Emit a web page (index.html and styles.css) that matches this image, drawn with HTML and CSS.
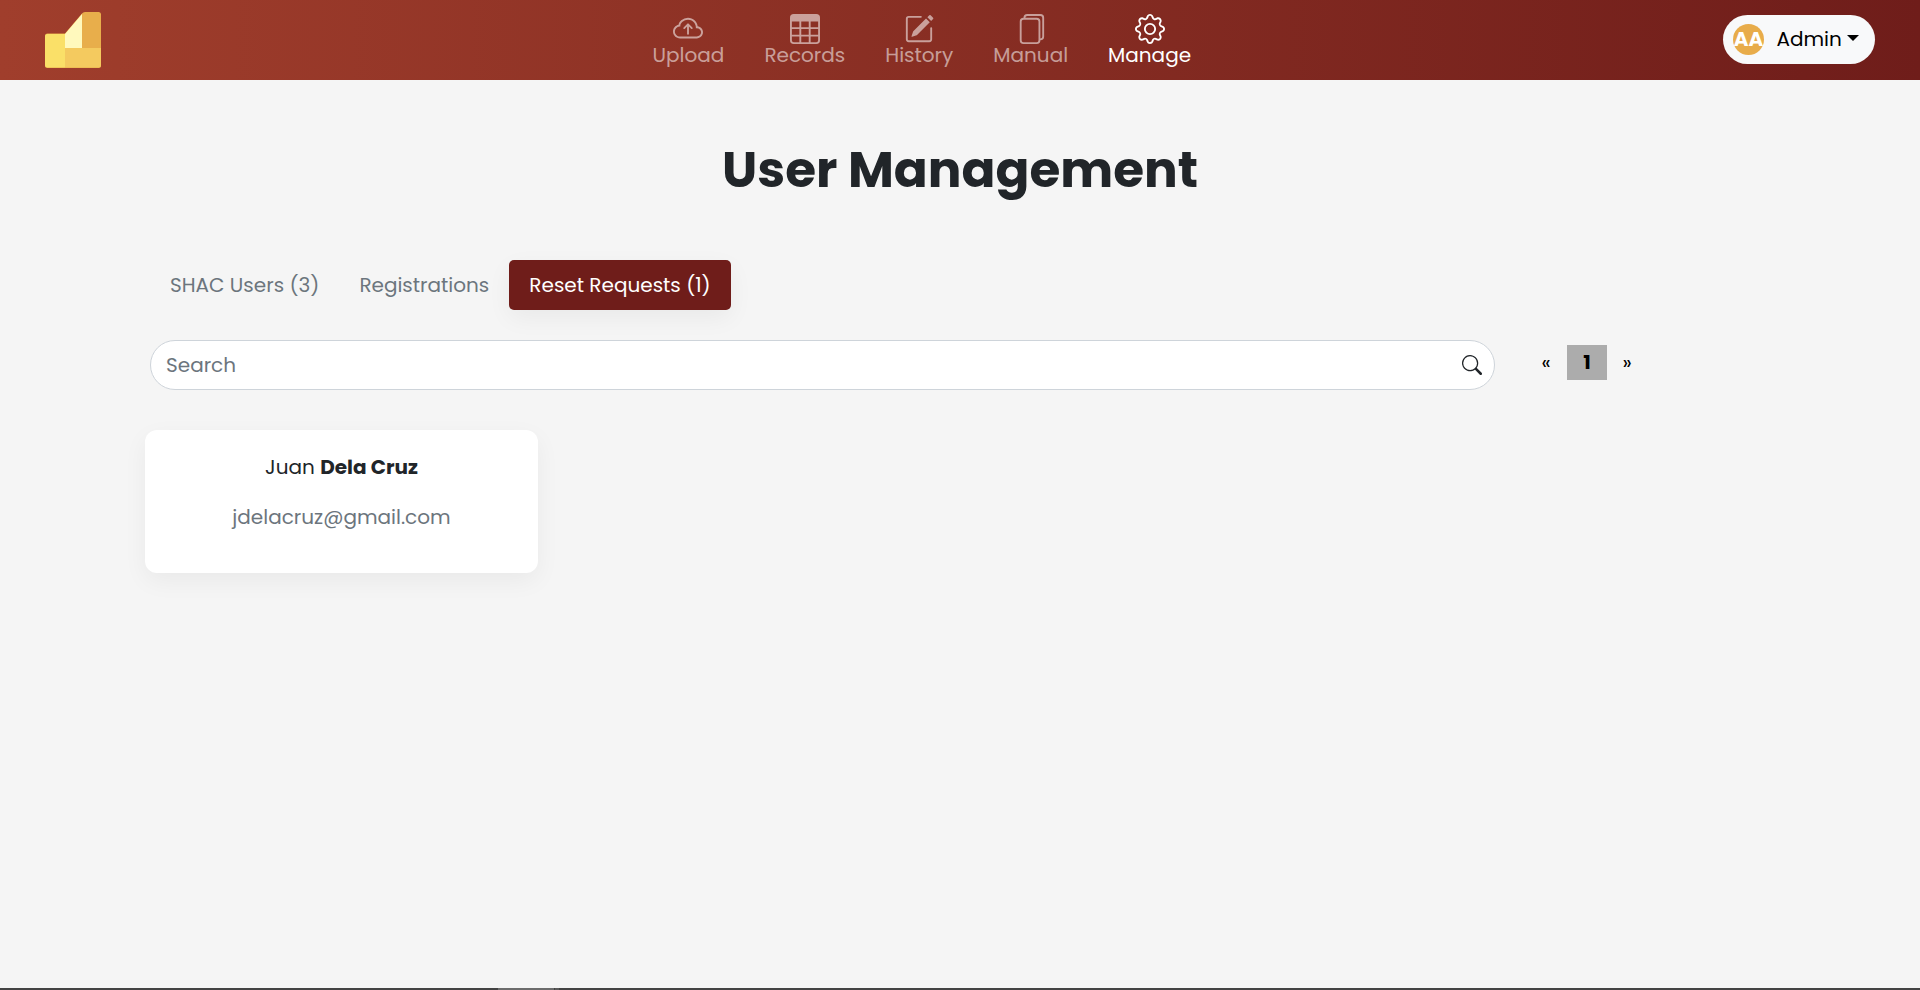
FILE: index.html
```html
<!DOCTYPE html>
<html lang="en">
<head>
<meta charset="utf-8">
<title>User Management</title>
<link rel="stylesheet" href="styles.css">
</head>
<body>
<header class="navbar">
  <a class="brand">
    <svg class="logo" viewBox="0 0 56 56">
      <path d="M0 24q0-2.500 2.500-2.500H20L37 1.500Q38 0 40 0H53.500Q56 0 56 2.500V53.500Q56 56 53.500 56H2.500Q0 56 0 53.500Z" fill="#e8ae4b"/>
      <path d="M0 24.500Q0 22 2.500 22H20V55.500H2.500Q0 55.500 0 53Z" fill="#fae068"/>
      <path d="M20 22L37 2V36H20Z" fill="#fff9bd"/>
      <path d="M20 36H56V53Q56 55.500 53.500 55.500H20Z" fill="#f4ca5f"/>
    </svg>
  </a>
  <nav class="menu">
    <a class="menu-item">
      <svg class="icon" viewBox="0 0 16 16"><path fill-rule="evenodd" d="M7.646 5.146a.5.5 0 0 1 .708 0l2 2a.5.5 0 0 1-.708.708L8.500 6.707V10.500a.5.5 0 0 1-1 0V6.707L6.354 7.854a.5.5 0 1 1-.708-.708z"/><path d="M4.406 3.342A5.530 5.530 0 0 1 8 2c2.690 0 4.923 2 5.166 4.579C14.758 6.804 16 8.137 16 9.773 16 11.569 14.502 13 12.687 13H3.781C1.708 13 0 11.366 0 9.318c0-1.763 1.266-3.223 2.942-3.593.143-.863.698-1.723 1.464-2.383m.653.757c-.757.653-1.153 1.440-1.153 2.056v.448l-.445.049C2.064 6.805 1 7.952 1 9.318 1 10.785 2.230 12 3.781 12h8.906C13.980 12 15 10.988 15 9.773c0-1.216-1.020-2.228-2.313-2.228h-.5v-.5C12.188 4.825 10.328 3 8 3a4.530 4.530 0 0 0-2.941 1.100z"/></svg>
      <span>Upload</span>
    </a>
    <a class="menu-item">
      <svg class="icon" viewBox="0 0 16 16"><path d="M0 2a2 2 0 0 1 2-2h12a2 2 0 0 1 2 2v12a2 2 0 0 1-2 2H2a2 2 0 0 1-2-2zm15 2h-4v3h4zm0 4h-4v3h4zm0 4h-4v3h3a1 1 0 0 0 1-1zm-5 3v-3H6v3zm-5 0v-3H1v2a1 1 0 0 0 1 1zm-4-4h4V8H1zm0-4h4V4H1zm5-3v3h4V4zm4 4H6v3h4z"/></svg>
      <span>Records</span>
    </a>
    <a class="menu-item">
      <svg class="icon" viewBox="0 0 16 16"><path d="M15.502 1.940a.5.5 0 0 1 0 .706L14.459 3.690l-2-2L13.502.646a.5.5 0 0 1 .707 0l1.293 1.293zm-1.750 2.456-2-2L4.939 9.210a.5.5 0 0 0-.121.196l-.805 2.414a.25.25 0 0 0 .316.316l2.414-.805a.5.5 0 0 0 .196-.12l6.813-6.814z"/><path fill-rule="evenodd" d="M1 13.500A1.500 1.500 0 0 0 2.500 15h11a1.500 1.500 0 0 0 1.500-1.500v-6a.5.5 0 0 0-1 0v6a.5.5 0 0 1-.5.5h-11a.5.5 0 0 1-.5-.5v-11a.5.5 0 0 1 .5-.5H9a.5.5 0 0 0 0-1H2.500A1.500 1.500 0 0 0 1 2.500z"/></svg>
      <span>History</span>
    </a>
    <a class="menu-item">
      <svg class="icon" viewBox="0 0 16 16"><path d="M13 0H6a2 2 0 0 0-2 2 2 2 0 0 0-2 2v10a2 2 0 0 0 2 2h7a2 2 0 0 0 2-2 2 2 0 0 0 2-2V2a2 2 0 0 0-2-2m0 13V4a2 2 0 0 0-2-2H5a1 1 0 0 1 1-1h7a1 1 0 0 1 1 1v10a1 1 0 0 1-1 1M3 4a1 1 0 0 1 1-1h7a1 1 0 0 1 1 1v10a1 1 0 0 1-1 1H4a1 1 0 0 1-1-1z"/></svg>
      <span>Manual</span>
    </a>
    <a class="menu-item active">
      <svg class="icon" viewBox="0 0 16 16"><path d="M8 4.754a3.246 3.246 0 1 0 0 6.492 3.246 3.246 0 0 0 0-6.492M5.754 8a2.246 2.246 0 1 1 4.492 0 2.246 2.246 0 0 1-4.492 0"/><path d="M9.796 1.343c-.527-1.790-3.065-1.790-3.592 0l-.094.319a.873.873 0 0 1-1.255.52l-.292-.16c-1.640-.892-3.433.902-2.540 2.541l.159.292a.873.873 0 0 1-.52 1.255l-.319.094c-1.790.527-1.790 3.065 0 3.592l.319.094a.873.873 0 0 1 .52 1.255l-.16.292c-.892 1.640.901 3.434 2.541 2.540l.292-.159a.873.873 0 0 1 1.255.52l.094.319c.527 1.790 3.065 1.790 3.592 0l.094-.319a.873.873 0 0 1 1.255-.52l.292.16c1.640.893 3.434-.902 2.540-2.541l-.159-.292a.873.873 0 0 1 .52-1.255l.319-.094c1.790-.527 1.790-3.065 0-3.592l-.319-.094a.873.873 0 0 1-.52-1.255l.16-.292c.893-1.640-.902-3.433-2.541-2.540l-.292.159a.873.873 0 0 1-1.255-.52zm-2.633.283c.246-.835 1.428-.835 1.674 0l.094.319a1.873 1.873 0 0 0 2.693 1.115l.291-.16c.764-.415 1.600.42 1.184 1.185l-.159.292a1.873 1.873 0 0 0 1.116 2.692l.318.094c.835.246.835 1.428 0 1.674l-.319.094a1.873 1.873 0 0 0-1.115 2.693l.16.291c.415.764-.42 1.600-1.185 1.184l-.291-.159a1.873 1.873 0 0 0-2.693 1.116l-.094.318c-.246.835-1.428.835-1.674 0l-.094-.319a1.873 1.873 0 0 0-2.692-1.115l-.292.16c-.764.415-1.600-.42-1.184-1.185l.159-.291A1.873 1.873 0 0 0 1.945 8.930l-.319-.094c-.835-.246-.835-1.428 0-1.674l.319-.094A1.873 1.873 0 0 0 3.060 4.377l-.16-.292c-.415-.764.42-1.600 1.185-1.184l.292.159a1.873 1.873 0 0 0 2.692-1.115z"/></svg>
      <span>Manage</span>
    </a>
  </nav>
  <button class="account"><span class="avatar">AA</span><span class="account-name">Admin</span><span class="caret"></span></button>
</header>
<main class="page">
  <h1 class="title">User Management</h1>
  <div class="tabs">
    <a class="tab">SHAC Users (3)</a>
    <a class="tab">Registrations</a>
    <a class="tab selected">Reset Requests (1)</a>
  </div>
  <div class="toolbar">
    <div class="search">
      <span class="placeholder">Search</span>
      <svg class="search-icon" viewBox="0 0 16 16"><path d="M11.742 10.344a6.500 6.500 0 1 0-1.397 1.398h-.001q.044.06.098.115l3.850 3.850a1 1 0 0 0 1.415-1.414l-3.850-3.850a1 1 0 0 0-.115-.1zM12 6.500a5.500 5.500 0 1 1-11 0 5.500 5.500 0 0 1 11 0"/></svg>
    </div>
    <div class="pagination"><a class="arrow previous">«</a><a class="current">1</a><a class="arrow">»</a></div>
  </div>
  <section class="card">
    <div class="name">Juan <b>Dela Cruz</b></div>
    <div class="email">jdelacruz@gmail.com</div>
  </section>
</main>
<footer class="bottom-edge"><span class="edge-light"></span><span class="edge-mark"></span></footer>
</body>
</html>
```
FILE: styles.css
```css
* { box-sizing: border-box; }
body {
  margin: 0;
  height: 990px;
  display: flex;
  flex-direction: column;
  overflow: hidden;
  background: #f5f5f5;
  color: #212529;
  font: 400 20px/30px Poppins, Inter, sans-serif;
}
.navbar {
  height: 80px;
  display: grid;
  grid-template-columns: 632.6px 579px 1fr;
  background: linear-gradient(to right, #a03e2c, #6f1d1a);
}
.brand { padding: 12px 0 0 45px; }
.logo { display: block; width: 56px; height: 56px; }
.menu { display: flex; padding-top: 14px; }
.menu-item {
  display: flex;
  flex-direction: column;
  align-items: center;
  padding: 0 20px;
  color: rgba(255, 255, 255, .55);
}
.menu-item span { margin-top: -4px; }
.menu-item.active { color: #fff; }
.icon { width: 30px; height: 30px; fill: currentColor; }
.account {
  justify-self: end;
  margin: 15px 45px 0 0;
  width: 152px;
  height: 49px;
  padding: 0 0 0 10px;
  display: flex;
  align-items: center;
  border: 0;
  border-radius: 25px;
  background: #f8f9fa;
  color: #000;
  font: inherit;
}
.avatar {
  width: 31px;
  height: 31px;
  margin-right: 12px;
  border-radius: 50%;
  display: flex;
  flex: none;
  justify-content: center;
  background: #e8ac4a;
  color: #fff;
  font-weight: 700;
}
.account-name { width: 70px; margin-left: .5px; padding-bottom: 1px; text-align: left; }
.caret {
  margin-bottom: 3px;
  border: 6px solid transparent;
  border-top-color: #000;
  border-bottom: 0;
}
.page { flex: 1; padding: 60px 145px 0; }
.title {
  margin: 0 0 60px;
  font-size: 50px;
  line-height: 60px;
  font-weight: 700;
  text-align: center;
}
.tabs { display: flex; padding-left: 5px; }
.tab { height: 50px; padding: 10px 20px; color: #6c757d; white-space: nowrap; }
.selected {
  border-radius: 5px;
  background: #6f1d1a;
  color: #fff;
  box-shadow: 0 8px 25px rgba(0, 0, 0, .05);
}
.toolbar { display: flex; padding: 30px 0 0 5px; }
.search {
  width: 1345px;
  height: 50px;
  padding: 0 12px 0 15px;
  display: flex;
  align-items: center;
  justify-content: space-between;
  border: 1px solid #ced4da;
  border-radius: 25px;
  background: #fff;
}
.placeholder { color: #6c757d; }
.search-icon { width: 20px; height: 20px; fill: #212529; }
.pagination { display: flex; margin: 5px 0 0 32px; height: 35px; line-height: 35px; color: #000; }
.arrow { width: 40px; text-align: center; }
.previous { padding-right: 2px; }
.current { width: 40px; background: #acacac; text-align: center; font-weight: 700; }
.card {
  margin-top: 40px;
  width: 393px;
  height: 143px;
  padding-top: 22px;
  border-radius: 12px;
  background: #fff;
  box-shadow: 0 8px 25px rgba(0, 0, 0, .05);
  text-align: center;
}
.email { margin-top: 20px; color: #6c757d; }
.bottom-edge { height: 2px; padding-left: 498px; display: flex; gap: 1px; background: #434343; }
.edge-light { width: 56px; background: #6c6c6c; }
.edge-mark { width: 4px; background: #5a5a5a; }
```
